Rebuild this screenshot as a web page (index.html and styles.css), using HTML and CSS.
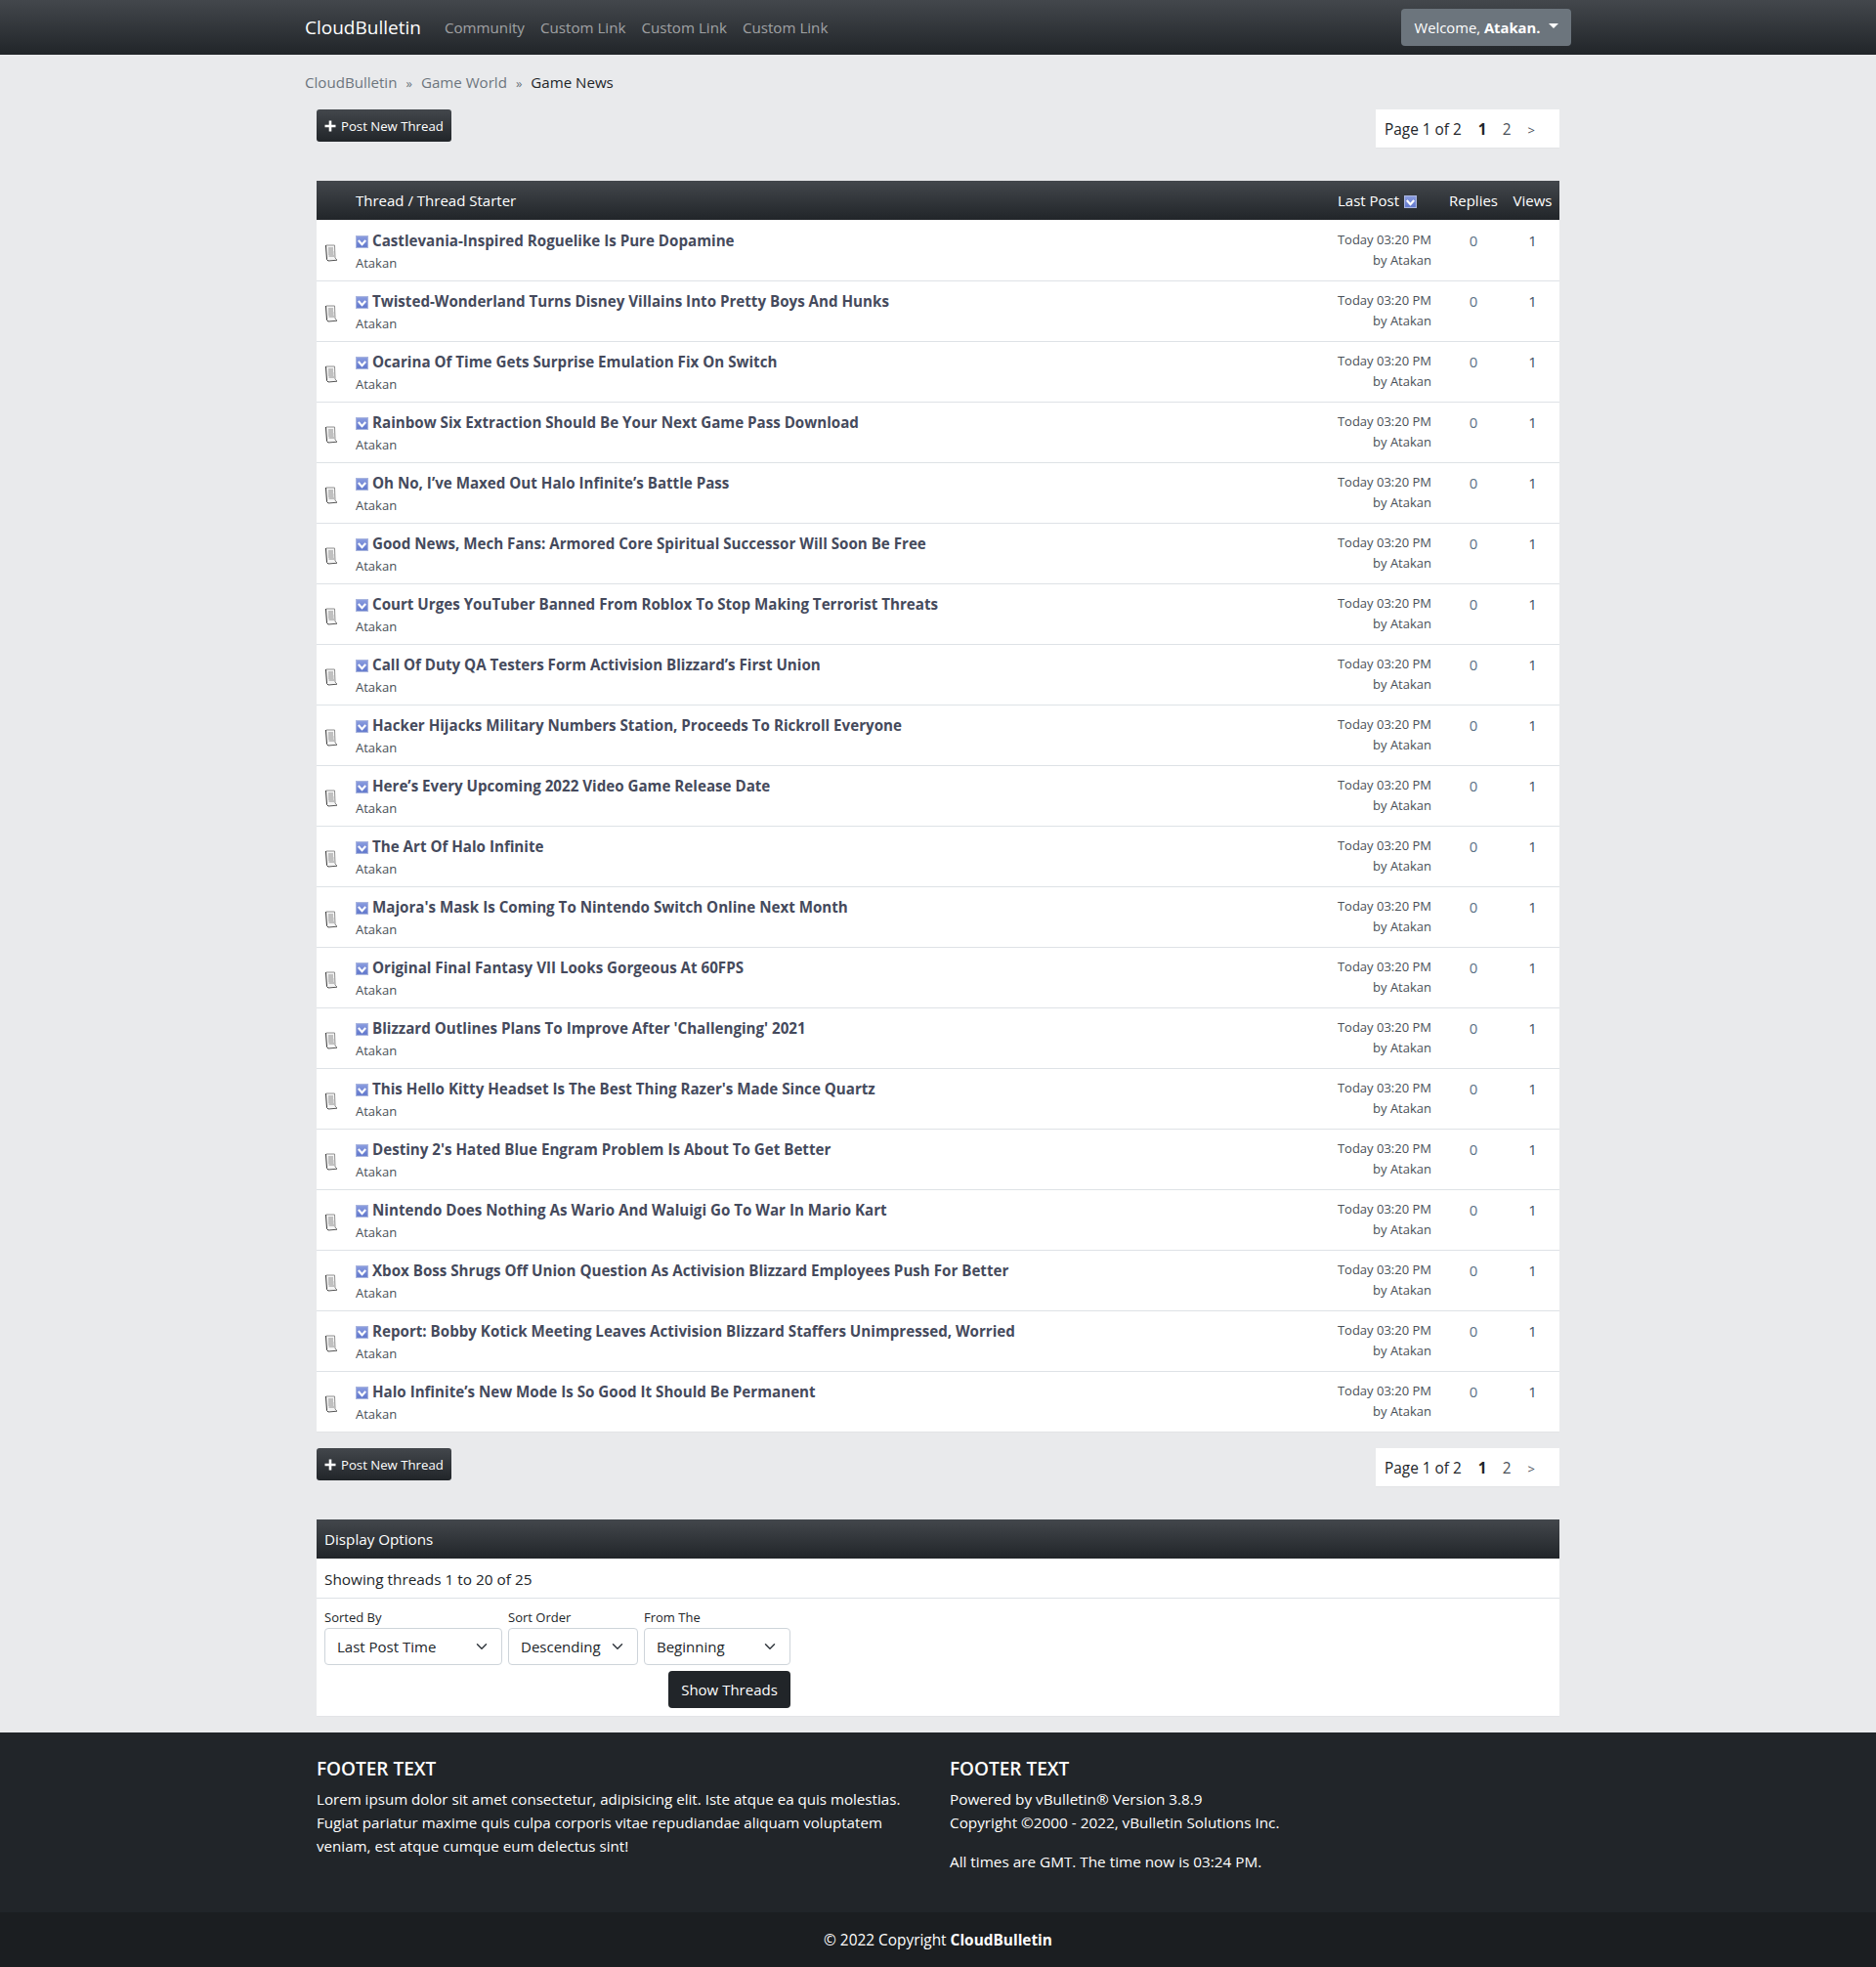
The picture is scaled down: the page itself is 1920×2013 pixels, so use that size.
FILE: index.html
```html
<!DOCTYPE html>
<html lang="en">
<head>
    <meta charset="UTF-8">
    <meta name="viewport" content="width=device-width, initial-scale=1.0">
    <title>Game News</title>
    <link rel="stylesheet" href="styles.css">
</head>
<body>
    <svg class="defs" width="0" height="0">
        <defs>
            <linearGradient id="boxfill" x1="0" y1="0" x2="0" y2="1">
                <stop offset="0" stop-color="#8b9de0"/>
                <stop offset="1" stop-color="#5f76cb"/>
            </linearGradient>
            <symbol id="check" viewBox="0 0 12 12">
                <rect x="0.5" y="0.5" width="11" height="11" fill="url(#boxfill)" stroke="#a9b5de"/>
                <path d="M2.6 4.6 L6 8.4 L9.4 4.6" fill="none" stroke="#fff" stroke-width="2"/>
            </symbol>
            <symbol id="doc" viewBox="0 0 14 18">
                <path d="M2 1 H10 L11 14 L13 16 L4 17 L3 15 Z" fill="#f5f5f5"/>
                <path d="M1.5 1 L2.5 15.5 L4 17" fill="none" stroke="#333" stroke-width="1"/>
                <path d="M2 1 H10.5 L11 14 L13 16" fill="none" stroke="#8f8f8f" stroke-width="1"/>
                <path d="M4 17 L13 16.2" fill="none" stroke="#555" stroke-width="1"/>
                <path d="M4 4 H9 M4 6 H9 M4 8 H9.5 M4 10 H9.5 M4.5 12 H10" stroke="#8c8c8c" stroke-width="1"/>
            </symbol>
            <symbol id="plus" viewBox="0 0 12 12">
                <path d="M6 0.5 V11.5 M0.5 6 H11.5" stroke="#fff" stroke-width="2.6"/>
            </symbol>
        </defs>
    </svg>

    <header class="topbar">
        <div class="container topbar-inner">
            <a class="brand" href="#">CloudBulletin</a>
            <nav class="topnav">
                <a href="#">Community</a>
                <a href="#">Custom Link</a>
                <a href="#">Custom Link</a>
                <a href="#">Custom Link</a>
            </nav>
            <button class="welcome-btn">Welcome, <b>Atakan.</b><span class="caret"></span></button>
        </div>
    </header>

    <div class="container">
        <div class="crumbs">
            <a href="#">CloudBulletin</a><span class="sep">&raquo;</span><a href="#">Game World</a><span class="sep">&raquo;</span><span class="crumb-now">Game News</span>
        </div>

        <div class="content">
            <div class="actions actions-top">
                <a class="post-btn" href="#"><svg class="plus"><use href="#plus"/></svg>Post New Thread</a>
                <div class="pager"><span>Page 1 of 2</span><b>1</b><a href="#">2</a><a class="next" href="#">&gt;</a></div>
            </div>

            <table class="threads">
                <thead>
                    <tr>
                        <th class="col-icon"></th>
                        <th class="col-title">Thread / Thread Starter</th>
                        <th class="col-last">Last Post <svg class="box box-head"><use href="#check"/></svg></th>
                        <th class="col-replies">Replies</th>
                        <th class="col-views">Views</th>
                    </tr>
                </thead>
                <tbody>
                    <tr><td class="cell-icon"><svg class="doc"><use href="#doc"/></svg></td><td><a class="title" href="#"><svg class="box"><use href="#check"/></svg>Castlevania-Inspired Roguelike Is Pure Dopamine</a><div class="starter">Atakan</div></td><td class="cell-last"><div>Today 03:20 PM</div><div>by Atakan</div></td><td class="num">0</td><td class="num views">1</td></tr>
                    <tr><td class="cell-icon"><svg class="doc"><use href="#doc"/></svg></td><td><a class="title" href="#"><svg class="box"><use href="#check"/></svg>Twisted-Wonderland Turns Disney Villains Into Pretty Boys And Hunks</a><div class="starter">Atakan</div></td><td class="cell-last"><div>Today 03:20 PM</div><div>by Atakan</div></td><td class="num">0</td><td class="num views">1</td></tr>
                    <tr><td class="cell-icon"><svg class="doc"><use href="#doc"/></svg></td><td><a class="title" href="#"><svg class="box"><use href="#check"/></svg>Ocarina Of Time Gets Surprise Emulation Fix On Switch</a><div class="starter">Atakan</div></td><td class="cell-last"><div>Today 03:20 PM</div><div>by Atakan</div></td><td class="num">0</td><td class="num views">1</td></tr>
                    <tr><td class="cell-icon"><svg class="doc"><use href="#doc"/></svg></td><td><a class="title" href="#"><svg class="box"><use href="#check"/></svg>Rainbow Six Extraction Should Be Your Next Game Pass Download</a><div class="starter">Atakan</div></td><td class="cell-last"><div>Today 03:20 PM</div><div>by Atakan</div></td><td class="num">0</td><td class="num views">1</td></tr>
                    <tr><td class="cell-icon"><svg class="doc"><use href="#doc"/></svg></td><td><a class="title" href="#"><svg class="box"><use href="#check"/></svg>Oh No, I’ve Maxed Out Halo Infinite’s Battle Pass</a><div class="starter">Atakan</div></td><td class="cell-last"><div>Today 03:20 PM</div><div>by Atakan</div></td><td class="num">0</td><td class="num views">1</td></tr>
                    <tr><td class="cell-icon"><svg class="doc"><use href="#doc"/></svg></td><td><a class="title" href="#"><svg class="box"><use href="#check"/></svg>Good News, Mech Fans: Armored Core Spiritual Successor Will Soon Be Free</a><div class="starter">Atakan</div></td><td class="cell-last"><div>Today 03:20 PM</div><div>by Atakan</div></td><td class="num">0</td><td class="num views">1</td></tr>
                    <tr><td class="cell-icon"><svg class="doc"><use href="#doc"/></svg></td><td><a class="title" href="#"><svg class="box"><use href="#check"/></svg>Court Urges YouTuber Banned From Roblox To Stop Making Terrorist Threats</a><div class="starter">Atakan</div></td><td class="cell-last"><div>Today 03:20 PM</div><div>by Atakan</div></td><td class="num">0</td><td class="num views">1</td></tr>
                    <tr><td class="cell-icon"><svg class="doc"><use href="#doc"/></svg></td><td><a class="title" href="#"><svg class="box"><use href="#check"/></svg>Call Of Duty QA Testers Form Activision Blizzard’s First Union</a><div class="starter">Atakan</div></td><td class="cell-last"><div>Today 03:20 PM</div><div>by Atakan</div></td><td class="num">0</td><td class="num views">1</td></tr>
                    <tr><td class="cell-icon"><svg class="doc"><use href="#doc"/></svg></td><td><a class="title" href="#"><svg class="box"><use href="#check"/></svg>Hacker Hijacks Military Numbers Station, Proceeds To Rickroll Everyone</a><div class="starter">Atakan</div></td><td class="cell-last"><div>Today 03:20 PM</div><div>by Atakan</div></td><td class="num">0</td><td class="num views">1</td></tr>
                    <tr><td class="cell-icon"><svg class="doc"><use href="#doc"/></svg></td><td><a class="title" href="#"><svg class="box"><use href="#check"/></svg>Here’s Every Upcoming 2022 Video Game Release Date</a><div class="starter">Atakan</div></td><td class="cell-last"><div>Today 03:20 PM</div><div>by Atakan</div></td><td class="num">0</td><td class="num views">1</td></tr>
                    <tr><td class="cell-icon"><svg class="doc"><use href="#doc"/></svg></td><td><a class="title" href="#"><svg class="box"><use href="#check"/></svg>The Art Of Halo Infinite</a><div class="starter">Atakan</div></td><td class="cell-last"><div>Today 03:20 PM</div><div>by Atakan</div></td><td class="num">0</td><td class="num views">1</td></tr>
                    <tr><td class="cell-icon"><svg class="doc"><use href="#doc"/></svg></td><td><a class="title" href="#"><svg class="box"><use href="#check"/></svg>Majora's Mask Is Coming To Nintendo Switch Online Next Month</a><div class="starter">Atakan</div></td><td class="cell-last"><div>Today 03:20 PM</div><div>by Atakan</div></td><td class="num">0</td><td class="num views">1</td></tr>
                    <tr><td class="cell-icon"><svg class="doc"><use href="#doc"/></svg></td><td><a class="title" href="#"><svg class="box"><use href="#check"/></svg>Original Final Fantasy VII Looks Gorgeous At 60FPS</a><div class="starter">Atakan</div></td><td class="cell-last"><div>Today 03:20 PM</div><div>by Atakan</div></td><td class="num">0</td><td class="num views">1</td></tr>
                    <tr><td class="cell-icon"><svg class="doc"><use href="#doc"/></svg></td><td><a class="title" href="#"><svg class="box"><use href="#check"/></svg>Blizzard Outlines Plans To Improve After 'Challenging' 2021</a><div class="starter">Atakan</div></td><td class="cell-last"><div>Today 03:20 PM</div><div>by Atakan</div></td><td class="num">0</td><td class="num views">1</td></tr>
                    <tr><td class="cell-icon"><svg class="doc"><use href="#doc"/></svg></td><td><a class="title" href="#"><svg class="box"><use href="#check"/></svg>This Hello Kitty Headset Is The Best Thing Razer's Made Since Quartz</a><div class="starter">Atakan</div></td><td class="cell-last"><div>Today 03:20 PM</div><div>by Atakan</div></td><td class="num">0</td><td class="num views">1</td></tr>
                    <tr><td class="cell-icon"><svg class="doc"><use href="#doc"/></svg></td><td><a class="title" href="#"><svg class="box"><use href="#check"/></svg>Destiny 2's Hated Blue Engram Problem Is About To Get Better</a><div class="starter">Atakan</div></td><td class="cell-last"><div>Today 03:20 PM</div><div>by Atakan</div></td><td class="num">0</td><td class="num views">1</td></tr>
                    <tr><td class="cell-icon"><svg class="doc"><use href="#doc"/></svg></td><td><a class="title" href="#"><svg class="box"><use href="#check"/></svg>Nintendo Does Nothing As Wario And Waluigi Go To War In Mario Kart</a><div class="starter">Atakan</div></td><td class="cell-last"><div>Today 03:20 PM</div><div>by Atakan</div></td><td class="num">0</td><td class="num views">1</td></tr>
                    <tr><td class="cell-icon"><svg class="doc"><use href="#doc"/></svg></td><td><a class="title" href="#"><svg class="box"><use href="#check"/></svg>Xbox Boss Shrugs Off Union Question As Activision Blizzard Employees Push For Better</a><div class="starter">Atakan</div></td><td class="cell-last"><div>Today 03:20 PM</div><div>by Atakan</div></td><td class="num">0</td><td class="num views">1</td></tr>
                    <tr><td class="cell-icon"><svg class="doc"><use href="#doc"/></svg></td><td><a class="title" href="#"><svg class="box"><use href="#check"/></svg>Report: Bobby Kotick Meeting Leaves Activision Blizzard Staffers Unimpressed, Worried</a><div class="starter">Atakan</div></td><td class="cell-last"><div>Today 03:20 PM</div><div>by Atakan</div></td><td class="num">0</td><td class="num views">1</td></tr>
                    <tr><td class="cell-icon"><svg class="doc"><use href="#doc"/></svg></td><td><a class="title" href="#"><svg class="box"><use href="#check"/></svg>Halo Infinite’s New Mode Is So Good It Should Be Permanent</a><div class="starter">Atakan</div></td><td class="cell-last"><div>Today 03:20 PM</div><div>by Atakan</div></td><td class="num">0</td><td class="num views">1</td></tr>
                </tbody>
            </table>

            <div class="actions actions-bottom">
                <a class="post-btn" href="#"><svg class="plus"><use href="#plus"/></svg>Post New Thread</a>
                <div class="pager"><span>Page 1 of 2</span><b>1</b><a href="#">2</a><a class="next" href="#">&gt;</a></div>
            </div>

            <section class="options">
                <h2 class="options-head">Display Options</h2>
                <div class="options-count">Showing threads 1 to 20 of 25</div>
                <form class="options-form">
                    <div class="fields">
                        <label class="field">Sorted By
                            <select class="sel-sort"><option>Last Post Time</option></select>
                        </label>
                        <label class="field">Sort Order
                            <select class="sel-order"><option>Descending</option></select>
                        </label>
                        <label class="field">From The
                            <select class="sel-from"><option>Beginning</option></select>
                        </label>
                    </div>
                    <button class="show-btn" type="button">Show Threads</button>
                </form>
            </section>
        </div>
    </div>

    <footer class="footer">
        <div class="container footer-cols">
            <div class="footer-col">
                <h3>FOOTER TEXT</h3>
                <p>Lorem ipsum dolor sit amet consectetur, adipisicing elit. Iste atque ea quis molestias. Fugiat pariatur maxime quis culpa corporis vitae repudiandae aliquam voluptatem veniam, est atque cumque eum delectus sint!</p>
            </div>
            <div class="footer-col footer-right">
                <h3>FOOTER TEXT</h3>
                <p>Powered by vBulletin® Version 3.8.9<br>Copyright ©2000 - 2022, vBulletin Solutions Inc.</p>
                <p class="footer-time">All times are GMT. The time now is 03:24 PM.</p>
            </div>
        </div>
        <div class="copyright">© 2022 Copyright <b>CloudBulletin</b></div>
    </footer>
</body>
</html>
```

FILE: styles.css
```css
* {
    box-sizing: border-box;
}
body {
    margin: 0;
    background-color: #e9eaec;
    color: #212529;
    font-family: "Open Sans", "Noto Sans", sans-serif;
    font-size: 15px;
    line-height: 24px;
}
a {
    text-decoration: none;
}
.defs {
    position: absolute;
}
.container {
    width: 1320px;
    margin: 0 auto;
    padding: 0 12px;
}

/* top bar */
.topbar {
    height: 56px;
    background: linear-gradient(#43474c, #212529);
}
.topbar-inner {
    display: flex;
    align-items: center;
    height: 56px;
}
.brand {
    color: white;
    font-size: 19px;
    margin-right: 24px;
}
.topnav {
    display: flex;
    gap: 16px;
    font-size: 15.15px;
}
.topnav a {
    color: rgba(255, 255, 255, 0.55);
}
.welcome-btn {
    margin-left: auto;
    display: flex;
    align-items: center;
    justify-content: center;
    width: 174px;
    height: 38px;
    background-color: #6c757d;
    border: none;
    border-radius: 4px;
    color: white;
    font-family: inherit;
    font-size: 14.8px;
    white-space: pre;
}
.caret {
    width: 0;
    height: 0;
    margin-left: 8px;
    margin-bottom: 3px;
    border-top: 5px solid white;
    border-left: 5px solid transparent;
    border-right: 5px solid transparent;
}

/* breadcrumb */
.crumbs {
    height: 56px;
    padding-top: 16px;
    color: #6c757d;
    font-size: 15.1px;
}
.crumbs a {
    color: #6c757d;
}
.sep {
    margin: 0 9px;
    font-size: 13px;
}
.crumb-now {
    color: #212529;
}

.content {
    padding: 0 12px;
}
.actions {
    display: flex;
    justify-content: space-between;
    align-items: flex-start;
}
.actions-top {
    height: 73px;
}
.actions-bottom {
    height: 73px;
    margin-top: 16px;
}
.post-btn {
    display: flex;
    align-items: center;
    gap: 5px;
    height: 33px;
    width: 138px;
    padding: 1px 8px 0;
    background: linear-gradient(#43474c, #212529);
    border-radius: 3px;
    color: white;
    font-size: 13.2px;
    white-space: nowrap;
}
.plus {
    width: 12px;
    height: 12px;
    flex-shrink: 0;
}
.pager {
    display: flex;
    align-items: center;
    width: 188px;
    height: 40px;
    padding: 2px 0 0 9px;
    background-color: white;
    border-bottom: 1px solid #e3e4e6;
    font-size: 15.4px;
}
.pager b {
    margin-left: 17px;
}
.pager a {
    color: #495057;
    margin-left: 16px;
}
.pager a.next {
    font-size: 13px;
    margin-left: 17px;
}

/* thread table */
.threads {
    width: 100%;
    table-layout: fixed;
    border-collapse: separate;
    border-spacing: 0;
    background-color: white;
}
.threads thead tr {
    height: 40px;
    background: linear-gradient(#43474c, #212529);
    color: white;
}
.threads th {
    padding: 0;
    font-weight: 400;
    text-align: left;
}
.col-icon {
    width: 40px;
}
.col-last {
    width: 143px;
    padding-left: 37px !important;
    white-space: nowrap;
}
.col-replies {
    width: 66px;
    text-align: center !important;
}
.col-views {
    width: 55px;
    text-align: center !important;
}
.threads td {
    height: 62px;
    padding: 0;
    vertical-align: top;
    border-top: 1px solid #dee2e6;
}
.threads tbody tr:first-child td {
    border-top-color: white;
}
.threads tbody tr:last-child td {
    height: 63px;
    border-bottom: 1px solid #e3e4e6;
}
.cell-icon {
    padding: 24px 0 0 8px !important;
}
.doc {
    display: block;
    width: 14px;
    height: 18px;
}
.box {
    width: 13px;
    height: 13px;
    margin-right: 4px;
    vertical-align: -2px;
}
.box-head {
    margin: 0 0 0 1px;
}
.title {
    display: block;
    padding-top: 8px;
    color: #454a5c;
    font-size: 15.15px;
    font-weight: 700;
    line-height: 24px;
}
.starter {
    color: #495057;
    font-size: 13px;
    line-height: 22px;
}
.cell-last {
    padding: 9px 10px 0 0 !important;
    color: #495057;
    font-size: 13px;
    line-height: 21px;
    text-align: right;
}
.num {
    padding-top: 8px !important;
    color: #5b7186;
    text-align: center;
}
.views {
    color: #3f5266;
}

/* display options */
.options {
    background-color: white;
    border-bottom: 1px solid #e3e4e6;
}
.options-head {
    height: 40px;
    margin: 0;
    padding: 8px;
    background: linear-gradient(#43474c, #212529);
    color: white;
    font-size: 15.2px;
    font-weight: 400;
}
.options-count {
    height: 41px;
    padding: 9px 8px 0;
    border-bottom: 1px solid #dee2e6;
    font-size: 15.35px;
}
.options-form {
    display: flex;
    flex-direction: column;
    align-items: flex-end;
    width: fit-content;
    padding: 9px 8px 8px;
}
.fields {
    display: flex;
    gap: 6px;
}
.field {
    display: block;
    font-size: 13px;
    line-height: 21px;
}
.field select {
    display: block;
    height: 38px;
    padding: 0 12px;
    appearance: none;
    background-color: white;
    background-image: url("data:image/svg+xml,%3csvg xmlns='http://www.w3.org/2000/svg' viewBox='0 0 16 16'%3e%3cpath fill='none' stroke='%23343a40' stroke-linecap='round' stroke-linejoin='round' stroke-width='2' d='m2 5 6 6 6-6'/%3e%3c/svg%3e");
    background-repeat: no-repeat;
    background-position: right 12px center;
    background-size: 16px 12px;
    border: 1px solid #ced4da;
    border-radius: 4px;
    color: #212529;
    font-family: inherit;
    font-size: 15px;
}
.sel-sort {
    width: 182px;
}
.sel-order {
    width: 133px;
}
.sel-from {
    width: 150px;
}
.show-btn {
    height: 38px;
    width: 125px;
    margin-top: 6px;
    background-color: #212529;
    border: none;
    border-radius: 4px;
    color: white;
    font-family: inherit;
    font-size: 15px;
}

/* footer */
.footer {
    margin-top: 16px;
    background-color: #212529;
    color: white;
}
.footer-cols {
    display: flex;
    height: 184px;
    padding-top: 25px;
}
.footer-col {
    width: 648px;
    padding: 0 12px;
}
.footer-col h3 {
    margin: 0 0 7px;
    font-size: 19px;
    font-weight: 600;
    line-height: 24px;
}
.footer-col p {
    margin: 0 0 16px;
    font-size: 15.13px;
}
.footer-right p {
    font-size: 15.3px;
}
.copyright {
    height: 56px;
    padding-top: 17px;
    background-color: #1b1e21;
    font-size: 15.4px;
    text-align: center;
}
```
